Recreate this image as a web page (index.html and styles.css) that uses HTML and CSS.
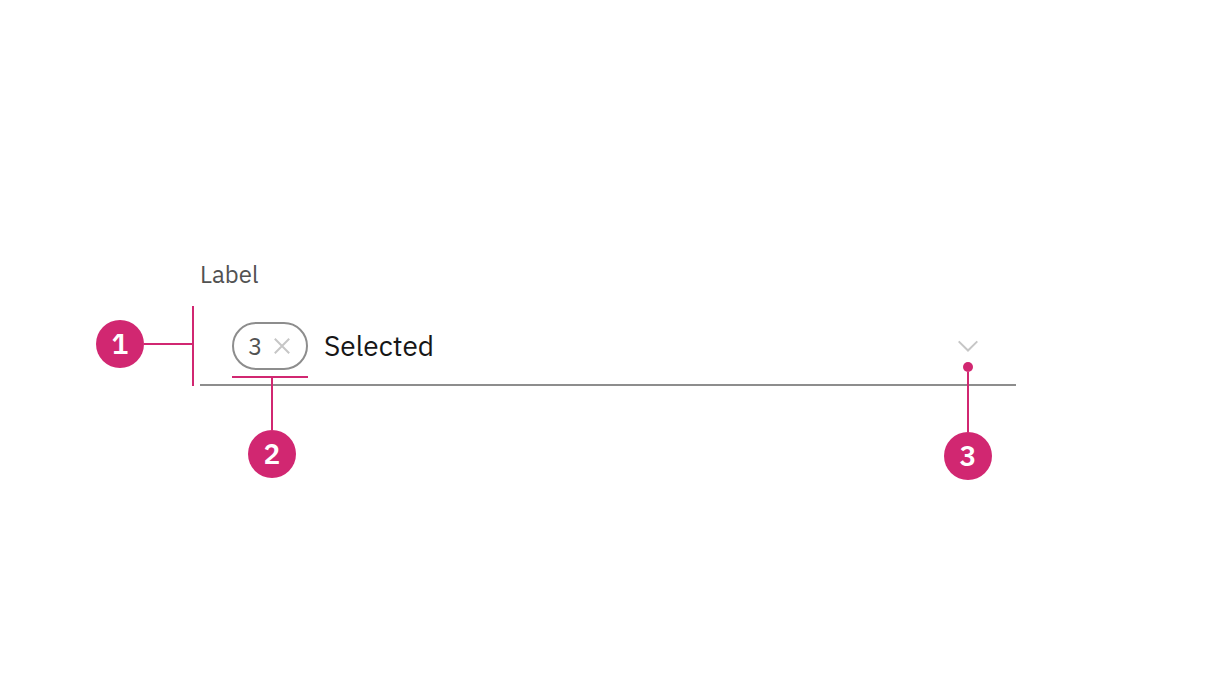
FILE: index.html
```html
<!DOCTYPE html>
<html lang="en">
<head>
<meta charset="utf-8">
<meta name="viewport" content="width=device-width, initial-scale=1">
<title>Multiselect anatomy</title>
<link rel="stylesheet" href="styles.css">
</head>
<body>
<main class="anatomy">
  <label class="label" for="multiselect">Label</label>
  <div class="field">
    <div class="tag">
      <span>3</span>
      <button class="clear" type="button" aria-label="Clear selection">
        <svg width="16" height="16" viewBox="0 0 16 16" fill="none" stroke="#c6c6c6" stroke-width="2"><path d="M.8.8l14.4 14.4M15.2.8L.8 15.2"/></svg>
      </button>
      <div class="note note-tag">
        <span class="number">2</span>
      </div>
    </div>
    <button class="trigger" id="multiselect" type="button" aria-haspopup="listbox" aria-expanded="false">
      <span>Selected</span>
      <svg width="32" height="32" viewBox="0 0 32 32" fill="none" stroke="#c6c6c6" stroke-width="2"><path d="M6.7 11.4L16 20.5l9.3-9.1"/></svg>
    </button>
    <div class="note note-field">
      <span class="number">1</span>
    </div>
    <div class="note note-icon">
      <span class="number">3</span>
    </div>
  </div>
</main>
</body>
</html>
```
FILE: styles.css
```css
* {
  box-sizing: border-box;
}

body {
  margin: 0;
  background: #fff;
  color: #161616;
  font-family: "IBM Plex Sans", "Noto Sans", sans-serif;
}

button {
  padding: 0;
  border: 0;
  background: none;
  color: inherit;
  font: inherit;
  cursor: pointer;
}

svg {
  display: block;
}

.anatomy {
  display: flex;
  flex-direction: column;
  gap: 16px;
  padding: 258px 200px 200px;
}

.label {
  align-self: flex-start;
  color: #525252;
  font-size: 24px;
  line-height: 32px;
}

.field {
  position: relative;
  display: flex;
  align-items: center;
  gap: 16px;
  min-height: 80px;
  padding: 16px 32px 14px;
  border-bottom: 2px solid #8d8d8d;
}

.tag {
  position: relative;
  display: flex;
  align-items: center;
  justify-content: space-between;
  width: 76px;
  height: 48px;
  padding: 0 16px 0 14px;
  border: 2px solid #8d8d8d;
  border-radius: 24px;
  color: #525252;
  font-size: 24px;
  line-height: 32px;
}

.trigger {
  display: flex;
  flex: 1;
  align-items: center;
  justify-content: space-between;
  font-size: 28px;
  line-height: 36px;
}

.note {
  position: absolute;
  display: flex;
  align-items: center;
}

.number {
  width: 48px;
  height: 48px;
  border-radius: 50%;
  background: #d12771;
  color: #fff;
  font-size: 28px;
  font-weight: 600;
  line-height: 48px;
  text-align: center;
}

.note-field {
  top: 0;
  left: -104px;
  width: 98px;
  height: 80px;
  padding-bottom: 4px;
  border-right: 2px solid #d12771;
}

.note-field::after {
  flex: 1;
  height: 2px;
  background: #d12771;
  content: "";
}

.note-tag {
  top: 52px;
  left: -2px;
  flex-direction: column;
  width: 76px;
  padding-left: 4px;
  border-top: 2px solid #d12771;
}

.note-tag::before {
  width: 2px;
  height: 52px;
  background: #d12771;
  content: "";
}

.note-icon {
  top: 56px;
  right: 24px;
  flex-direction: column;
}

.note-icon::before {
  width: 2px;
  height: 60px;
  border-top: 0;
  background: #d12771;
  content: "";
  order: 1;
}

.note-icon::after {
  width: 10px;
  height: 10px;
  border-radius: 50%;
  background: #d12771;
  content: "";
}

.note-icon .number {
  order: 2;
}
```
